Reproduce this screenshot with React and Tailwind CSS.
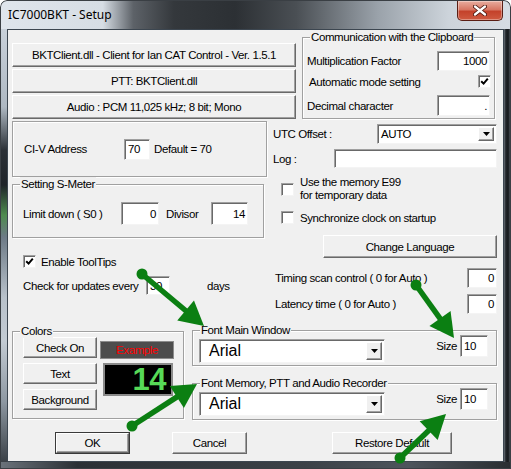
import React from 'react';

const sunken =
  'bg-white border border-t-[#a0a0a0] border-l-[#a0a0a0] border-b-[#f4f4f4] border-r-[#f4f4f4] shadow-[inset_1px_1px_0_#696969]';
const raised =
  'bg-[#f0f0f0] border border-t-white border-l-white border-b-[#696969] border-r-[#696969] shadow-[inset_-1px_-1px_0_#a0a0a0]';

function Btn({ className = '', children }) {
  return <div className={`${raised} flex items-center justify-center shrink-0 ${className}`}>{children}</div>;
}

function Input({ className = '', value = '', align = 'right' }) {
  return (
    <div
      className={`${sunken} flex items-center shrink-0 ${align === 'right' ? 'justify-end pr-[2px]' : 'pl-[3px]'} ${className}`}
    >
      {value}
    </div>
  );
}

function Check({ checked }) {
  return (
    <span className={`${sunken} w-[13px] h-[13px] flex items-center justify-center shrink-0`}>
      {checked && (
        <svg width="9" height="9" viewBox="0 0 9 9">
          <path d="M1.2 4.2 L3.6 6.6 L7.8 1.6" stroke="#000" strokeWidth="2" fill="none" />
        </svg>
      )}
    </span>
  );
}

function Select({ className = '', value, textClass = '' }) {
  return (
    <div className={`${sunken} flex items-stretch shrink-0 p-[2px] ${className}`}>
      <div className={`flex-1 flex items-center ${textClass}`}>{value}</div>
      <div className={`${raised} w-[16px] flex items-center justify-center`}>
        <svg width="7" height="4" viewBox="0 0 7 4">
          <path d="M0 0 H7 L3.5 4 Z" fill="#000" />
        </svg>
      </div>
    </div>
  );
}

function Group({ label, className = '', children }) {
  return (
    <div
      className={`relative border border-[#a0a0a0] shadow-[1px_1px_0_#fff,inset_1px_1px_0_#fff] shrink-0 ${className}`}
    >
      {label && (
        <span className="absolute -top-[8px] left-[7px] bg-[#f0f0f0] px-[1px] leading-[14px] whitespace-nowrap">
          {label}
        </span>
      )}
      {children}
    </div>
  );
}

function Arrow({ x1, y1, x2, y2 }) {
  const dx = x2 - x1;
  const dy = y2 - y1;
  const len = Math.hypot(dx, dy);
  const ux = dx / len;
  const uy = dy / len;
  const L = 24;
  const W = 13;
  const bx = x2 - ux * L;
  const by = y2 - uy * L;
  const px = -uy * W;
  const py = ux * W;
  return (
    <g fill="#0b7f12">
      <line x1={x1} y1={y1} x2={bx + ux * 3} y2={by + uy * 3} stroke="#0b7f12" strokeWidth="5.5" />
      <circle cx={x1} cy={y1} r="5.5" />
      <polygon points={`${x2},${y2} ${bx + px},${by + py} ${bx - px},${by - py}`} />
    </g>
  );
}

export default function App() {
  return (
    <div className="w-[511px] h-[469px] bg-white">
      <div className="relative w-[511px] h-[469px] flex flex-col rounded-t-[7px] overflow-hidden font-['Liberation_Sans',Arial,sans-serif] text-[11.5px] tracking-[-0.4px] leading-[14px] text-black">
        {/* title bar */}
        <div className="h-[29px] flex items-start border-t border-x border-[#3a3f44] rounded-t-[7px] bg-[linear-gradient(90deg,#dfe5ec_0%,#d6dde4_20%,#5d6268_26%,#34383c_34%,#2c3034_46%,#4a4f54_58%,#9aa2aa_74%,#cdd4db_88%,#d6dce3_100%)]">
          <span className="pl-[7px] pt-[6px] font-['Noto_Sans',sans-serif] text-[12px] tracking-normal leading-[16px] text-black">
            IC7000BKT - Setup
          </span>
          <div className="ml-auto mr-[7px] w-[46px] h-[20px] rounded-b-[5px] border border-t-0 border-[#5a1e14] bg-[linear-gradient(180deg,#e8ad9f_0%,#d77764_45%,#c4422b_55%,#cf5a40_100%)] shadow-[inset_0_0_0_1px_rgba(255,255,255,0.35)] flex items-center justify-center">
            <svg width="14" height="11" viewBox="0 0 14 11">
              <path d="M2 1.5 L12 9.5 M12 1.5 L2 9.5" stroke="#4a150d" strokeWidth="4" strokeLinecap="round" />
              <path d="M2 1.5 L12 9.5 M12 1.5 L2 9.5" stroke="#fff" strokeWidth="2.3" strokeLinecap="round" />
            </svg>
          </div>
        </div>

        {/* middle */}
        <div className="flex h-[433px]">
          <div className="w-[7px] border-l border-[#3a3f44] bg-[linear-gradient(180deg,#c9d1da_0%,#aeb8c2_18%,#2b3036_28%,#1f2429_36%,#4e8b4e_43%,#6d7a86_48%,#b8c1ca_62%,#c3cbd3_72%,#8e98a2_86%,#3a4046_100%)]" />

          {/* client */}
          <div className="w-[497px] h-[433px] border border-[#3c4650] bg-[#f0f0f0] flex flex-col">
            {/* row 1 */}
            <div className="flex mt-[7px]">
              <div className="ml-[4px] mt-[6px] w-[284px] flex flex-col gap-[2px]">
                <Btn className="h-[24px]">BKTClient.dll - Client for Ian CAT Control - Ver. 1.5.1</Btn>
                <Btn className="h-[24px]">PTT: BKTClient.dll</Btn>
                <Btn className="h-[24px]">Audio : PCM 11,025 kHz; 8 bit; Mono</Btn>
              </div>
              <Group label="Communication with the Clipboard" className="ml-[6px] w-[193px] h-[82px]">
                <div className="flex flex-col px-[4px]">
                  <div className="mt-[13px] h-[20px] flex items-center justify-between">
                    <span>Multiplication Factor</span>
                    <Input className="w-[53px] h-[20px]" value="1000" />
                  </div>
                  <div className="mt-[4px] h-[13px] flex items-center justify-between pl-[2px] -mr-[1px]">
                    <span>Automatic mode setting</span>
                    <Check checked />
                  </div>
                  <div className="mt-[7px] h-[21px] flex items-center justify-between">
                    <span>Decimal character</span>
                    <Input className="w-[53px] h-[21px]" value="." />
                  </div>
                </div>
              </Group>
            </div>

            {/* row 2 */}
            <div className="flex mt-[2px]">
              <div className="ml-[4px] w-[255px] flex flex-col">
                <Group className="w-[255px] h-[56px] flex items-center pl-[11px]">
                  <span className="w-[100px]">CI-V Address</span>
                  <Input className="w-[26px] h-[21px]" value="70" align="left" />
                  <span className="ml-[4px]">Default = 70</span>
                </Group>
                <Group label="Setting S-Meter" className="mt-[7px] w-[252px] h-[54px] flex items-center pt-[5px] pl-[10px]">
                  <span className="w-[98px]">Limit down ( S0 )</span>
                  <Input className="w-[38px] h-[23px]" value="0" />
                  <span className="ml-[7px] w-[45px]">Divisor</span>
                  <Input className="w-[37px] h-[23px]" value="14" />
                </Group>
                <div className="mt-[17px] ml-[11px] h-[13px] flex items-center">
                  <Check checked />
                  <span className="ml-[5px]">Enable ToolTips</span>
                </div>
                <div className="mt-[8px] ml-[11px] h-[19px] flex items-center">
                  <span className="w-[123px]">Check for updates every</span>
                  <Input className="w-[24px] h-[19px]" value="30" align="left" />
                  <span className="ml-[37px]">days</span>
                </div>
              </div>

              <div className="ml-[6px] w-[224px] flex flex-col">
                <div className="mt-[3px] h-[20px] flex items-center justify-between">
                  <span>UTC Offset :</span>
                  <Select className="w-[120px] h-[20px]" value="AUTO" textClass="pl-[1px]" />
                </div>
                <div className="mt-[5px] h-[19px] flex items-center justify-between">
                  <span>Log :</span>
                  <Input className="w-[163px] h-[19px]" />
                </div>
                <div className="mt-[8px] ml-[8px] flex items-center">
                  <Check />
                  <span className="ml-[6px] leading-[13px]">
                    Use the memory E99
                    <br />
                    for temporary data
                  </span>
                </div>
                <div className="mt-[9px] ml-[8px] h-[13px] flex items-center">
                  <Check />
                  <span className="ml-[6px]">Synchronize clock on startup</span>
                </div>
                <Btn className="mt-[11px] self-end w-[174px] h-[23px]">Change Language</Btn>
                <div className="mt-[10px] h-[20px] flex items-center justify-between">
                  <span className="ml-[2px]">Timing scan control ( 0 for Auto )</span>
                  <Input className="w-[30px] h-[20px]" value="0" />
                </div>
                <div className="mt-[6px] h-[20px] flex items-center justify-between">
                  <span className="ml-[2px]">Latency time ( 0 for Auto )</span>
                  <Input className="w-[30px] h-[20px]" value="0" />
                </div>
              </div>
            </div>

            {/* row 3 */}
            <div className="flex mt-[16px]">
              <Group label="Colors" className="ml-[4px] mt-[1px] w-[172px] h-[88px] flex pl-[10px] pt-[5px]">
                <div className="flex flex-col gap-[5px]">
                  <Btn className="w-[74px] h-[21px]">Check On</Btn>
                  <Btn className="w-[74px] h-[21px]">Text</Btn>
                  <Btn className="w-[74px] h-[21px]">Background</Btn>
                </div>
                <div className="ml-[3px] flex flex-col">
                  <div className="mt-[4px] w-[74px] h-[18px] bg-[#4d4d4d] border border-[#8c8c8c] flex items-center justify-center text-[#ff0000]">
                    Example
                  </div>
                  <div className="ml-[3px] mt-[4px] w-[70px] h-[33px] bg-black border-2 border-[#8a8a8a] flex items-center justify-end pr-[5px] text-[31px] leading-[31px] font-bold tracking-[-0.5px] text-[#57d957]">
                    14
                  </div>
                </div>
              </Group>

              <div className="ml-[8px] w-[305px] flex flex-col">
                <Group label="Font Main Window" className="w-[305px] h-[36px] flex items-start pl-[6px] pr-[8px]">
                  <Select
                    className="mt-[8px] w-[186px] h-[24px]"
                    value="Arial"
                    textClass="pl-[7px] text-[16px] tracking-normal"
                  />
                  <div className="ml-auto mt-[4px] flex items-center">
                    <span className="mr-[3px]">Size</span>
                    <Input className="w-[28px] h-[22px]" value="10" align="left" />
                  </div>
                </Group>
                <Group
                  label="Font Memory, PTT and Audio Recorder"
                  className="mt-[17px] w-[305px] h-[37px] flex items-start pl-[6px] pr-[8px]"
                >
                  <Select
                    className="mt-[8px] w-[186px] h-[24px]"
                    value="Arial"
                    textClass="pl-[7px] text-[16px] tracking-normal"
                  />
                  <div className="ml-auto mt-[4px] flex items-center">
                    <span className="mr-[3px]">Size</span>
                    <Input className="w-[28px] h-[22px]" value="10" align="left" />
                  </div>
                </Group>
              </div>
            </div>

            {/* row 4 */}
            <div className="flex mt-[12px]">
              <div className="ml-[47px] w-[75px] h-[22px] border border-[#3a3a3a] flex">
                <Btn className="flex-1">OK</Btn>
              </div>
              <Btn className="ml-[42px] w-[75px] h-[22px]">Cancel</Btn>
              <Btn className="ml-[85px] w-[120px] h-[22px]">Restore Default</Btn>
            </div>
          </div>

          <div className="w-[7px] border-r border-[#3a3f44] bg-[linear-gradient(90deg,#6b737b_0%,#23272b_30%,#15181b_70%,#4a5056_100%)]" />
        </div>

        {/* bottom frame */}
        <div className="h-[7px] border-x border-b border-[#3a3f44] bg-[linear-gradient(90deg,#6a727a_0%,#2b3035_15%,#3c4248_60%,#4d555c_80%,#2a2e32_100%)]" />

        {/* annotation arrows */}
        <svg className="absolute inset-0 pointer-events-none" width="511" height="469" viewBox="0 0 511 469">
          <Arrow x1={142} y1={274} x2={204} y2={326} />
          <Arrow x1={416} y1={285} x2={454} y2={338} />
          <Arrow x1={132} y1={426} x2={197} y2={384} />
          <Arrow x1={400} y1={458} x2={446} y2={414} />
        </svg>
      </div>
    </div>
  );
}
